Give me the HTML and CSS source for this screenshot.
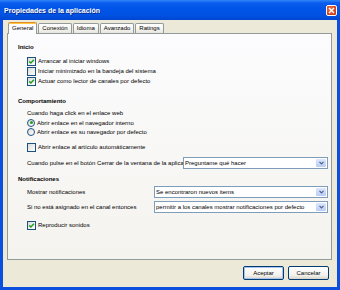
FILE: index.html
```html
<!DOCTYPE html>
<html lang="es">
<head>
    <meta charset="UTF-8">
    <title>Propiedades de la aplicación</title>
    <link rel="stylesheet" href="styles.css">
</head>
<body>
    <div class="window">
        <div class="titlebar">
            <span class="title">Propiedades de la aplicación</span>
            <span class="close">
                <svg width="7" height="7" viewBox="0 0 7 7"><path d="M1 1 L6 6 M6 1 L1 6" stroke="#fff" stroke-width="1.4"/></svg>
            </span>
        </div>

        <div class="client">
            <div class="tabs">
                <span class="tab active">General</span>
                <span class="tab">Conexión</span>
                <span class="tab">Idioma</span>
                <span class="tab">Avanzado</span>
                <span class="tab">Ratings</span>
            </div>

            <div class="panel">
                <!-- Inicio -->
                <div class="heading">Inicio</div>
                <div class="group">
                    <label class="item"><span class="check"><svg viewBox="0 0 7 7"><path d="M1.2 3.4 L2.9 5 L5.9 1.8"/></svg></span>Arrancar al iniciar windows</label>
                    <label class="item"><span class="check"></span>Iniciar minimizado en la bandeja del sistema</label>
                    <label class="item"><span class="check"><svg viewBox="0 0 7 7"><path d="M1.2 3.4 L2.9 5 L5.9 1.8"/></svg></span>Actuar como lector de canales por defecto</label>
                </div>

                <!-- Comportamiento -->
                <div class="heading section">Comportamiento</div>
                <div class="text first">Cuando haga click en el enlace web</div>
                <label class="item small"><span class="radio on"></span>Abrir enlace en el navegador interno</label>
                <label class="item small"><span class="radio"></span>Abrir enlace es su navegador por defecto</label>
                <label class="item spaced"><span class="check"></span>Abrir enlace al artículo automáticamente</label>
                <div class="field close-field">
                    <span class="label">Cuando pulse en el botón Cerrar de la ventana de la aplica</span>
                    <div class="combo narrow"><span>Preguntame qué hacer</span><i class="arrow"><svg width="5" height="4" viewBox="0 0 5 4"><path d="M0.5 0.8 L2.5 2.8 L4.5 0.8" fill="none" stroke="#4D6185" stroke-width="1.2"/></svg></i></div>
                </div>

                <!-- Notificaciones -->
                <div class="heading notify">Notificaciones</div>
                <div class="field show-field">
                    <span class="label">Mostrar notificaciones</span>
                    <div class="combo wide"><span>Se encontraron nuevos items</span><i class="arrow"><svg width="5" height="4" viewBox="0 0 5 4"><path d="M0.5 0.8 L2.5 2.8 L4.5 0.8" fill="none" stroke="#4D6185" stroke-width="1.2"/></svg></i></div>
                </div>
                <div class="field channel-field">
                    <span class="label">Si no está asignado en el canal entonces</span>
                    <div class="combo wide"><span>permitir a los canales mostrar notificaciones por defecto</span><i class="arrow"><svg width="5" height="4" viewBox="0 0 5 4"><path d="M0.5 0.8 L2.5 2.8 L4.5 0.8" fill="none" stroke="#4D6185" stroke-width="1.2"/></svg></i></div>
                </div>
                <label class="item sounds"><span class="check"><svg viewBox="0 0 7 7"><path d="M1.2 3.4 L2.9 5 L5.9 1.8"/></svg></span>Reproducir sonidos</label>
            </div>

            <div class="footer">
                <button class="btn default">Aceptar</button>
                <button class="btn">Cancelar</button>
            </div>
        </div>
    </div>
</body>
</html>
```

FILE: styles.css
```css
* {
    box-sizing: border-box;
}
body {
    margin: 0;
    font-family: "Liberation Sans", Arial, sans-serif;
    font-size: 6px;
    color: #000;
}
.window {
    width: 340px;
    height: 290px;
    display: flex;
    flex-direction: column;
    background: #0A4FDD; /* marco azul */
}

/* Barra de titulo estilo XP */
.titlebar {
    flex: none;
    height: 20px;
    display: flex;
    align-items: center;
    justify-content: space-between;
    padding: 0 3px 0 4px;
    background: linear-gradient(#2E86F8 0, #0A5CEE 3px, #0055E8 8px, #0052E2 15px, #0046D2 20px);
}
.title {
    color: #fff;
    font-size: 7px;
    font-weight: bold;
    text-shadow: 1px 1px 0 #0A2A93;
}
.close {
    width: 11px;
    height: 11px;
    border: 1px solid #fff;
    border-radius: 2px;
    background: radial-gradient(circle at 40% 35%, #EE7A4F, #D5471C 60%, #B8360F);
    display: flex;
    align-items: center;
    justify-content: center;
}

.client {
    flex: 1;
    display: flex;
    flex-direction: column;
    margin: 0 3px 3px;
    padding: 0 5px 0 4px;
    background: #ECE9D8;
}

/* Pestañas */
.tabs {
    flex: none;
    height: 13px;
    display: flex;
    align-items: flex-end;
    gap: 1px;
    padding-left: 1px;
}
.tab {
    height: 10px;
    line-height: 9px;
    padding: 0 3px;
    border: 1px solid #919B9C;
    border-bottom: none;
    border-radius: 2px 2px 0 0;
    background: linear-gradient(#FFFFFF, #F3F3EF 60%, #E6E5DD);
}
.tab.active {
    position: relative;
    z-index: 1;
    height: 12px;
    line-height: 10px;
    margin-bottom: -1px;
    border-top: 1px solid #E68B2C;
    box-shadow: inset 0 1px 0 #FFC83C;
    background: #FCFCFE;
}

.panel {
    flex: none;
    height: 227px;
    padding: 8px 3px 0 10px;
    border: 1px solid #919B9C;
    background: linear-gradient(#FCFCFE, #F4F3EE);
}
.heading {
    font-weight: bold;
    line-height: 10px;
}
.heading.section {
    margin-top: 10px;
}
.heading.notify {
    margin-top: 5px;
}
.group {
    margin-top: 4px;
}
.item {
    display: flex;
    align-items: center;
    height: 10px;
    margin-left: 9px;
}
.item.small {
    height: 9px;
}
.item.spaced {
    margin-top: 6px;
}
.item.sounds {
    margin-top: 7px;
}
.text {
    line-height: 9px;
    margin-left: 9px;
}
.text.first {
    margin-top: 3px;
}

/* Casillas y radios */
.check {
    width: 9px;
    height: 9px;
    margin-right: 2px;
    border: 1px solid #1C5180;
    background: linear-gradient(135deg, #DCDCD7, #FFFFFF);
    display: flex;
    align-items: center;
    justify-content: center;
}
.check svg {
    width: 7px;
    height: 7px;
    fill: none;
    stroke: #21A121;
    stroke-width: 1.5;
}
.radio {
    width: 8px;
    height: 8px;
    margin-right: 2px;
    border: 1px solid #1C5180;
    border-radius: 50%;
    background: linear-gradient(135deg, #DCDCD7, #FFFFFF);
    display: flex;
    align-items: center;
    justify-content: center;
}
.radio.on::after {
    content: "";
    width: 3px;
    height: 3px;
    border-radius: 50%;
    background: #21A121;
}

/* Fila con desplegable */
.field {
    display: flex;
    align-items: center;
    height: 12px;
    margin-left: 9px;
}
.field .label {
    flex: 1;
    white-space: nowrap;
    overflow: hidden;
}
.close-field {
    margin-top: 5px;
}
.show-field {
    margin-top: 2px;
}
.channel-field {
    margin-top: 3px;
}
.combo {
    flex: none;
    display: flex;
    height: 12px;
    border: 1px solid #7F9DB9;
    background: #fff;
}
.combo.narrow {
    width: 145px;
}
.combo.wide {
    width: 174px;
}
.combo span {
    flex: 1;
    padding-left: 1px;
    line-height: 10px;
    white-space: nowrap;
    overflow: hidden;
}
.arrow {
    width: 10px;
    margin: 1px;
    border-radius: 1px;
    background: linear-gradient(#DDE7FD, #B8CCF5);
    display: flex;
    align-items: center;
    justify-content: center;
}

/* Botones */
.footer {
    flex: 1;
    display: flex;
    justify-content: flex-end;
    align-items: flex-start;
    gap: 4px;
    padding: 6px 3px 0 0;
}
.btn {
    width: 41px;
    height: 14px;
    padding: 0;
    border: 1px solid #003C74;
    border-radius: 2px;
    background: linear-gradient(#FFFFFF, #F2F1EC 70%, #D8D3C7);
    font-family: "Liberation Sans", Arial, sans-serif;
    font-size: 6px;
    color: #000;
}
.btn.default {
    box-shadow: inset 0 0 0 1px #A9C2EE;
}
```
